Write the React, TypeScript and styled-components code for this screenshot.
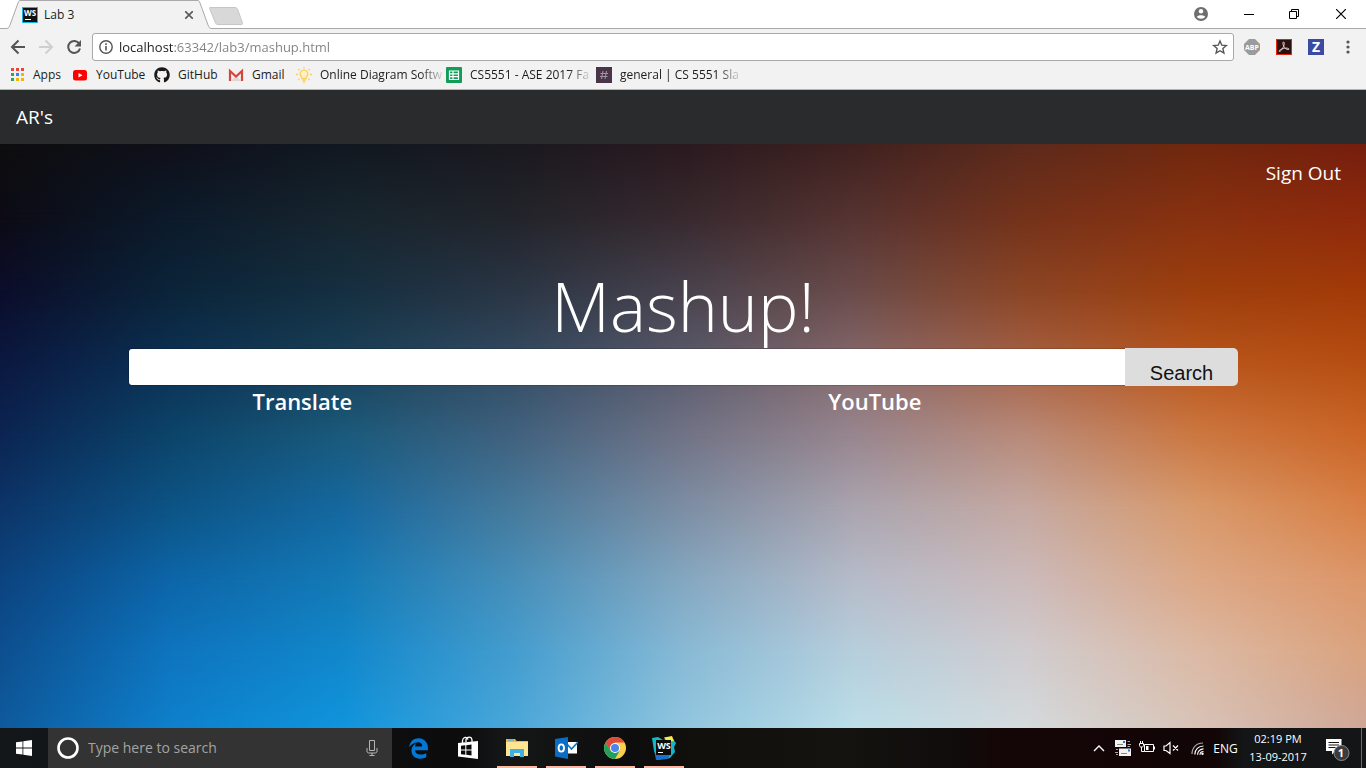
import React from "react";
import styled, { createGlobalStyle } from "styled-components";
import { FaEdgeLegacy, FaGithub } from "react-icons/fa";

const UI_FONT = '"Open Sans", "Noto Sans", sans-serif';

const GlobalStyle = createGlobalStyle`
  *, *::before, *::after { box-sizing: border-box; }
  body { margin: 0; font-family: ${UI_FONT}; font-size: 12px; color: #1c1c1c; }
  button { font: inherit; color: inherit; background: none; border: 0; padding: 0; margin: 0; cursor: pointer; }
  a { color: inherit; text-decoration: none; }
  h1, h2 { margin: 0; }
  svg { display: block; flex: none; }
`;

const Screen = styled.div`
  display: flex;
  flex-direction: column;
  min-height: 100vh;
`;

/* ---------- Browser window ---------- */

const Browser = styled.header`
  display: flex;
  flex-direction: column;
  background: #f2f2f2;
  border-bottom: 1px solid #b4b4b4;
`;

const TabStrip = styled.div`
  display: flex;
  align-items: flex-start;
  height: 29px;
  padding-left: 6px;
  background: #ffffff;
  border-bottom: 1px solid #a9a9a9;
`;

const Tab = styled.div`
  display: flex;
  height: 29px;
`;

const TabBody = styled.div`
  display: flex;
  align-items: center;
  gap: 6px;
  width: 178px;
  padding: 0 1px 0 2px;
  background: #f2f2f2;
  border-top: 1px solid #a9a9a9;
`;

const TabTitle = styled.span`
  flex: 1;
  line-height: 16px;
`;

const NewTab = styled.button`
  margin: 7px 0 0 -3px;
`;

const WindowButtons = styled.div`
  display: flex;
  align-items: center;
  height: 27px;
  margin-left: auto;
`;

const WindowButton = styled.button<{ $width: number }>`
  display: flex;
  align-items: center;
  justify-content: center;
  width: ${(p) => p.$width}px;
  height: 27px;
`;

const Toolbar = styled.div`
  display: flex;
  align-items: center;
  gap: 10px;
  height: 36px;
  padding: 0 10px;
`;

const HistoryButtons = styled.div`
  display: flex;
  gap: 12px;
`;

const ToolButton = styled.button`
  display: flex;
  align-items: center;
  justify-content: center;
  width: 16px;
  height: 16px;
`;

const AddressBar = styled.div`
  display: flex;
  flex: 1;
  align-items: center;
  gap: 5px;
  height: 28px;
  padding: 0 5px;
  background: #ffffff;
  border: 1px solid #a9a9a9;
  border-radius: 3px;
`;

const AddressInput = styled.input`
  flex: 1;
  min-width: 0;
  height: 20px;
  padding: 0;
  border: 0;
  outline: 0;
  font: 13px/20px ${UI_FONT};
  background: linear-gradient(90deg, #1c1c1c 55px, #808080 55px);
  background-clip: text;
  -webkit-text-fill-color: transparent;
`;

const Extensions = styled.div`
  display: flex;
  align-items: center;
  gap: 16px;
`;

const Bookmarks = styled.nav`
  display: flex;
  align-items: center;
  height: 24px;
  padding: 0 0 4px 9px;
`;

const BookmarkLink = styled.a<{ $width: number }>`
  display: flex;
  align-items: center;
  gap: 8px;
  width: ${(p) => p.$width}px;
`;

const BookmarkLabel = styled.span<{ $fade?: boolean }>`
  line-height: 18px;
  white-space: nowrap;
  mask-image: ${(p) => (p.$fade ? "linear-gradient(90deg, #000 82%, rgba(0, 0, 0, 0.15) 100%)" : "none")};
`;

/* ---------- Web page ---------- */

const Page = styled.main`
  display: flex;
  flex: 1;
  flex-direction: column;
  color: #ffffff;
`;

const NavBar = styled.nav`
  display: flex;
  align-items: center;
  height: 54px;
  padding: 0 16px;
  background: #292b2c;
  font-size: 19px;
`;

const Stage = styled.div`
  display: grid;
  flex: 1;
  grid-template: minmax(0, 1fr) / minmax(0, 1fr);
  background: #24171a;
`;

const Wash = styled.div<{ $stops: string; $from: number; $to: number }>`
  grid-area: 1 / 1;
  background: linear-gradient(90deg, ${(p) => p.$stops});
  mask-image: ${(p) =>
    p.$to === 0 ? "none" : `linear-gradient(180deg, transparent ${p.$from}%, #000 ${p.$to}%)`};
`;

const Content = styled.div`
  z-index: 1;
  display: flex;
  flex-direction: column;
  grid-area: 1 / 1;
`;

const SignOut = styled.a`
  align-self: flex-end;
  margin: 14px 25px 0 0;
  font-size: 19px;
  line-height: 30px;
`;

const Title = styled.h1`
  margin-top: 75px;
  font-size: 68px;
  font-weight: 300;
  line-height: 85px;
  text-align: center;
`;

const SearchForm = styled.form`
  display: flex;
  height: 38px;
  margin: 0 128px;
`;

const SearchInput = styled.input`
  flex: 1;
  min-width: 0;
  padding: 0 12px;
  border: 1px solid rgba(0, 0, 0, 0.15);
  border-right: 0;
  border-radius: 4px 0 0 4px;
  background: #ffffff;
  background-clip: padding-box;
  outline: 0;
  font-size: 16px;
`;

const SearchButton = styled.button`
  width: 113px;
  padding-top: 12px;
  border-radius: 0 5px 5px 0;
  background: #dddddd;
  color: #111111;
  font: 20px/24px "Liberation Sans", Arial, sans-serif;
`;

const Results = styled.div`
  display: flex;
  padding: 0 15% 0 16px;
`;

const ResultTitle = styled.h2`
  flex: 1;
  font-size: 22px;
  font-weight: 600;
  line-height: 30px;
  text-align: center;
`;

/* ---------- Taskbar ---------- */

const Taskbar = styled.footer`
  display: flex;
  height: 40px;
  background: linear-gradient(90deg, #14171a 0%, #0c0c0d 34%, #151717 37%, #0d0d0d 46%, #12100c 52%, #14130f 62%, #100c0c 70%, #150606 73%, #120506 89%, #131516 91%, #131516 100%);
  color: #ffffff;
`;

const StartButton = styled.button`
  display: flex;
  align-items: center;
  justify-content: center;
  width: 48px;
`;

const TaskSearch = styled.label`
  display: flex;
  align-items: center;
  gap: 8px;
  width: 344px;
  padding: 0 14px 0 8px;
  background: #333333;
`;

const TaskSearchInput = styled.input`
  flex: 1;
  min-width: 0;
  padding: 0;
  border: 0;
  outline: 0;
  background: none;
  font: 14px/20px ${UI_FONT};
  color: #ffffff;
  &::placeholder { color: #a3a3a3; opacity: 1; }
`;

const TaskApps = styled.div`
  display: flex;
  padding-left: 2px;
`;

const TaskApp = styled.button<{ $open?: boolean }>`
  display: flex;
  align-items: center;
  justify-content: center;
  width: 49px;
  background: ${(p) =>
    p.$open ? "linear-gradient(#fbb9a5, #fbb9a5) center bottom / 40px 2px no-repeat" : "none"};
`;

const Tray = styled.div`
  display: flex;
  align-items: center;
  margin-left: auto;
  border-right: 1px solid #6a6a6a;
  margin-right: 4px;
`;

const TrayButton = styled.button<{ $width: number }>`
  display: flex;
  align-items: center;
  justify-content: center;
  width: ${(p) => p.$width}px;
  height: 40px;
`;

const Clock = styled.button`
  width: 76px;
  font-size: 11px;
  line-height: 18px;
  white-space: nowrap;
`;

/* ---------- Drawings ---------- */

const Lettering = styled.text<{ $size: number }>`
  fill: #ffffff;
  font-family: "Open Sans", sans-serif;
  font-size: ${(p) => p.$size}px;
  font-weight: 700;
  text-anchor: middle;
`;

const WebStormBadge = () => (
  <svg width="16" height="16" viewBox="0 0 16 16" aria-hidden="true">
    <rect width="16" height="16" fill="#16b8dc" />
    <rect x="1" y="1" width="14" height="14" fill="#111" />
    <Lettering $size={8} x="8" y="9">WS</Lettering>
    <rect x="3" y="12" width="6" height="1" fill="#fff" />
  </svg>
);

const arrow = (color: string, back: boolean) => (
  <svg width="16" height="16" viewBox="0 0 16 16" fill="none" stroke={color} strokeWidth="2" aria-hidden="true">
    <path d={back ? "M15 8H2.500M8.500 1.500L2 8l6.500 6.500" : "M1 8h12.500M7.500 1.500L14 8l-6.500 6.500"} />
  </svg>
);

const AppsIcon = () => {
  const colors = ["#e8453c", "#e8453c", "#e8453c", "#2da94f", "#3b82f0", "#f5b400", "#2da94f", "#f5b400", "#f5b400"];
  return (
    <svg width="16" height="16" viewBox="0 0 16 16" aria-hidden="true">
      {colors.map((c, i) => (
        <rect key={i} x={2 + (i % 3) * 5} y={1 + Math.floor(i / 3) * 5} width="3" height="3" fill={c} />
      ))}
    </svg>
  );
};

const YouTubeIcon = () => (
  <svg width="16" height="16" viewBox="0 0 16 16" aria-hidden="true">
    <rect x="1" y="3" width="14" height="10.500" rx="2.500" fill="#f00" />
    <path d="M6.500 6v4.600l4-2.300z" fill="#fff" />
  </svg>
);

const GmailIcon = () => (
  <svg width="16" height="16" viewBox="0 0 16 16" aria-hidden="true">
    <rect x="1" y="3" width="14" height="11" fill="#f3efee" />
    <path d="M3 14l5-5 5 5z" fill="#ddd8d6" />
    <path d="M2 14V4l6 5.500L14 4v10" fill="none" stroke="#d6453b" strokeWidth="2.200" />
  </svg>
);

const BulbIcon = () => (
  <svg width="16" height="16" viewBox="0 0 16 16" fill="none" stroke="#fbcf5b" strokeWidth="1.300" aria-hidden="true">
    <path d="M6 11.500c0-2-1.800-2.500-1.800-4.500a3.800 3.800 0 0 1 7.600 0c0 2-1.800 2.500-1.800 4.500z" fill="#fff3c4" />
    <path d="M6 13h4M7 15h2M0 7.500h2M14 7.500h2M2.300 2l1.300 1.300M13.700 2l-1.300 1.300M8 0v1.500M2.300 13l1.300-1.300M13.700 13l-1.300-1.300" />
  </svg>
);

const SheetIcon = () => (
  <svg width="16" height="16" viewBox="0 0 16 16" aria-hidden="true">
    <rect width="16" height="16" rx="1" fill="#0f9d58" />
    <path d="M3.500 4h9v8.500h-9zM3.500 6.800h9M3.500 9.600h9M7 4v8.500" fill="none" stroke="#fff" strokeWidth="1.200" />
  </svg>
);

const SlackIcon = () => (
  <svg width="16" height="16" viewBox="0 0 16 16" aria-hidden="true">
    <rect width="16" height="16" fill="#4a3449" />
    <path d="M7 4L5.500 12M10.500 4L9 12M4.500 6.500h7.500M4 9.500h7.500" fill="none" stroke="#a394a2" />
  </svg>
);

const AbpIcon = () => (
  <svg width="16" height="16" viewBox="0 0 16 16" aria-hidden="true">
    <path d="M5 0h6l5 5v6l-5 5H5l-5-5V5z" fill="#9b9b9b" />
    <Lettering $size={7} x="8" y="11">ABP</Lettering>
  </svg>
);

const AcrobatIcon = () => (
  <svg width="16" height="16" viewBox="0 0 16 16" aria-hidden="true">
    <rect x=".5" y=".5" width="15" height="15" fill="#2b1010" stroke="#e1250c" />
    <path d="M7.500 3c1.400 0 .8 3-.3 5.200C6 10.700 4 13 3.200 12.400c-.8-.9 2-2.700 4.900-3.100 2.400-.4 5-.2 4.900.8-.2 1.200-3 .2-4.600-1.700C7 6.700 6.300 3 7.500 3z" fill="none" stroke="#e8dcdc" strokeWidth=".9" />
  </svg>
);

const ZIcon = () => (
  <svg width="16" height="16" viewBox="0 0 16 16" aria-hidden="true">
    <rect width="16" height="16" fill="#3b4ba3" />
    <Lettering $size={14} x="8" y="13">Z</Lettering>
  </svg>
);

const StoreIcon = () => (
  <svg width="22" height="24" viewBox="0 0 22 24" aria-hidden="true">
    <path d="M5.500 7V4.500C6 1 10 0 11 3.500M9 6V3.500C10 .5 14.500 0 15 4v2" fill="none" stroke="#fff" strokeWidth="1.300" />
    <path d="M1 7l20-2v18L1 20.500z" fill="#fff" />
    <path d="M4 9.800l4.300-.5v4.200H4zM9.300 9.200l5.200-.6v4.900H9.300zM4 14.500h4.300v4.200L4 18.200zM9.300 14.500h5.200v5l-5.200-.7z" fill="#0c0c0d" />
  </svg>
);

const FolderIcon = () => (
  <svg width="22" height="20" viewBox="0 0 22 20" aria-hidden="true">
    <path d="M0 1h9l1.500 2H22v15H0z" fill="#f0b93c" />
    <path d="M0 4h22v14H0z" fill="#ffe491" />
    <rect x="2" y="1.500" width="6" height="1.200" fill="#4fb3e8" />
    <path d="M4 11h14v8h-4v-4H8v4H4z" fill="#3fb0e6" />
  </svg>
);

const OutlookIcon = () => (
  <svg width="24" height="24" viewBox="0 0 24 24" aria-hidden="true">
    <rect x="12" y="6" width="11" height="11.500" fill="#fff" />
    <path d="M13 8l4.500 5L24 6" fill="none" stroke="#0f72c8" strokeWidth="1.600" />
    <path d="M1 3l13-2v22L1 20.500z" fill="#0a6cc2" />
    <ellipse cx="7.300" cy="12" rx="2.700" ry="3.600" fill="none" stroke="#fff" strokeWidth="1.900" />
  </svg>
);

const ChromeIcon = () => (
  <svg width="22" height="22" viewBox="0 0 22 22" aria-hidden="true">
    <circle cx="11" cy="11" r="11" fill="#fbd04b" />
    <path d="M1.500 5.500A11 11 0 0 1 20.500 5.500H11v5.500L6.200 13.700z" fill="#dd4b3e" />
    <path d="M1.500 5.500A11 11 0 0 0 11 22l4.700-8.300H6.300z" fill="#1fa05f" />
    <circle cx="11" cy="11" r="5" fill="#fff" />
    <circle cx="11" cy="11" r="4" fill="#4a86ee" />
  </svg>
);

const WebStormIcon = () => (
  <svg width="24" height="24" viewBox="0 0 24 24" aria-hidden="true">
    <path d="M0 2l6-1 5 3 9-2 4 5-2 4 1 5-5 6-13 2L2 15z" fill="#12b7c9" />
    <path d="M12 1.500L20 0l2 5-7 1z" fill="#f2ee50" />
    <path d="M3 18h15l-2 5-12 1z" fill="#1870d0" />
    <rect x="4" y="4" width="15" height="15" fill="#0c0c0c" />
    <Lettering $size={9} x="12" y="13">WS</Lettering>
    <rect x="6" y="16" width="5" height="1" fill="#fff" />
  </svg>
);

/* ---------- Data ---------- */

const bookmarks = [
  { label: "Apps", width: 63, icon: <AppsIcon /> },
  { label: "YouTube", width: 82, icon: <YouTubeIcon /> },
  { label: "GitHub", width: 74, icon: <FaGithub size={16} color="#1b1817" /> },
  { label: "Gmail", width: 68, icon: <GmailIcon /> },
  { label: "Online Diagram Softw", width: 150, icon: <BulbIcon />, fade: true },
  { label: "CS5551 - ASE 2017 Fa", width: 150, icon: <SheetIcon />, fade: true },
  { label: "general | CS 5551 Sla", width: 150, icon: <SlackIcon />, fade: true },
];

const apps = [
  { name: "Microsoft Edge", icon: <FaEdgeLegacy size={21} color="#0078d7" /> },
  { name: "Store", icon: <StoreIcon /> },
  { name: "File Explorer", icon: <FolderIcon />, open: true },
  { name: "Outlook", icon: <OutlookIcon />, open: true },
  { name: "Google Chrome", icon: <ChromeIcon />, open: true },
  { name: "WebStorm", icon: <WebStormIcon />, open: true },
];

/* Horizontal colour runs of the backdrop, top to bottom; each fades in over the one before. */
const washes = [
  "#0e0e0f, #0f101a, #111821, #1a191f, #2a1a1f, #3f211f, #5d2a1c, #70280e, #761e0e",
  "#0c0b15, #0c1a2a, #17252e, #22242b, #37292e, #553331, #74321a, #883110, #8f290c",
  "#0b0d2a, #0b2439, #152f40, #2a3544, #48424d, #6a4b4a, #8b4525, #9d3e0d, #a23a08",
  "#0b1840, #0c3154, #194058, #334b62, #595a6b, #86696c, #a66145, #b8561c, #b64e12",
  "#0b2552, #0c446a, #1a5a7c, #40627f, #717386, #98868f, #b98b7a, #cc7842, #cb6526",
  "#0c3569, #0c5486, #1568a0, #467a9c, #7c8ea4, #aaa5b0, #c5a9a2, #d89a6c, #d88046",
  "#0c4480, #0d66a9, #147ab6, #468fba, #84a8c1, #b6bcca, #ccbbbc, #dca988, #dc976a",
  "#0d5090, #0e75bf, #1188cc, #449dcf, #88bad6, #b6cfdd, #d0cdd0, #dcbaa6, #daa37f",
  "#0e5a9c, #0e80cc, #1094dc, #4aa7d9, #90c5de, #bcdee8, #d4dadd, #d8c3b7, #cfa797",
];
const washStep = 100 / (washes.length - 1);

export default function App() {
  return (
    <Screen>
      <GlobalStyle />
      <Browser>
        <TabStrip>
          <Tab>
            <svg width="14" height="29" viewBox="0 0 14 29" aria-hidden="true">
              <path d="M0 29L0 28.500C3 28.500 3 27 4 25L12 3C13 1 13 .5 14 .5V29z" fill="#f2f2f2" />
              <path d="M0 28.500C3 28.500 3 27 4 25L12 3C13 1 13 .5 14 .5" fill="none" stroke="#a9a9a9" />
            </svg>
            <TabBody>
              <WebStormBadge />
              <TabTitle>Lab 3</TabTitle>
              <ToolButton aria-label="Close tab">
                <svg width="8" height="8" viewBox="0 0 8 8" stroke="#5a5a5a" strokeWidth="1.600" aria-hidden="true">
                  <path d="M0 0l8 8M8 0L0 8" />
                </svg>
              </ToolButton>
            </TabBody>
            <svg width="14" height="29" viewBox="0 0 14 29" aria-hidden="true">
              <path d="M14 29V28.500C11 28.500 11 27 10 25L2 3C1 1 1 .5 0 .5V29z" fill="#f2f2f2" />
              <path d="M14 28.500C11 28.500 11 27 10 25L2 3C1 1 1 .5 0 .5" fill="none" stroke="#a9a9a9" />
            </svg>
          </Tab>
          <NewTab aria-label="New tab">
            <svg width="34" height="18" viewBox="0 0 34 18" aria-hidden="true">
              <path d="M1 .5h25c1 0 2 .5 2.500 1.500L33.500 16c.3 1-.2 1.500-1 1.500H9c-1 0-2-.5-2.500-1.500L.8 2C.5 1 .5.500 1 .500z" fill="#d8d8d8" stroke="#c6c6c6" />
            </svg>
          </NewTab>
          <WindowButtons>
            <WindowButton $width={51} aria-label="Profile">
              <svg width="14" height="14" viewBox="0 0 14 14" aria-hidden="true">
                <circle cx="7" cy="7" r="7" fill="#6e6e6e" />
                <circle cx="7" cy="4.300" r="2.200" fill="#fff" />
                <path d="M2.800 9.800C4 7.600 10 7.600 11.200 9.800 10 12.400 4 12.400 2.800 9.800z" fill="#fff" />
              </svg>
            </WindowButton>
            <WindowButton $width={46} aria-label="Minimize">
              <svg width="10" height="10" viewBox="0 0 10 10" stroke="#000" aria-hidden="true">
                <path d="M0 5.500h10" />
              </svg>
            </WindowButton>
            <WindowButton $width={44} aria-label="Restore">
              <svg width="10" height="10" viewBox="0 0 10 10" fill="none" stroke="#000" aria-hidden="true">
                <path d="M.5 2.500h7v7h-7zM2.500 2.500v-2h7v7h-2" />
              </svg>
            </WindowButton>
            <WindowButton $width={50} aria-label="Close">
              <svg width="10" height="10" viewBox="0 0 10 10" stroke="#000" strokeWidth="1.200" aria-hidden="true">
                <path d="M0 0l10 10M10 0L0 10" />
              </svg>
            </WindowButton>
          </WindowButtons>
        </TabStrip>

        <Toolbar>
          <HistoryButtons>
            <ToolButton aria-label="Back">{arrow("#555555", true)}</ToolButton>
            <ToolButton aria-label="Forward">{arrow("#cfcfcf", false)}</ToolButton>
            <ToolButton aria-label="Reload">
              <svg width="16" height="16" viewBox="0 0 16 16" aria-hidden="true">
                <path d="M13.300 4.700A6 6 0 1 0 14 9.500" fill="none" stroke="#555" strokeWidth="2" />
                <path d="M15 1v6.500H8.500z" fill="#555" />
              </svg>
            </ToolButton>
          </HistoryButtons>
          <AddressBar>
            <ToolButton aria-label="Site information">
              <svg width="14" height="14" viewBox="0 0 14 14" fill="none" stroke="#555" aria-hidden="true">
                <circle cx="7" cy="7" r="6.200" strokeWidth="1.400" />
                <path d="M7 6v4.500M7 3.300v1.600" strokeWidth="1.600" />
              </svg>
            </ToolButton>
            <AddressInput aria-label="Address" defaultValue="localhost:63342/lab3/mashup.html" />
            <ToolButton aria-label="Bookmark this page">
              <svg width="16" height="16" viewBox="0 0 16 16" fill="none" stroke="#555" strokeWidth="1.400" aria-hidden="true">
                <path d="M8 2l1.800 4.200 4.500.4-3.400 3 1 4.400L8 11.700 4.100 14l1-4.400-3.400-3 4.500-.4z" />
              </svg>
            </ToolButton>
          </AddressBar>
          <Extensions>
            <ToolButton aria-label="Adblock Plus"><AbpIcon /></ToolButton>
            <ToolButton aria-label="Adobe Acrobat"><AcrobatIcon /></ToolButton>
            <ToolButton aria-label="Zotero"><ZIcon /></ToolButton>
            <ToolButton aria-label="Menu">
              <svg width="4" height="14" viewBox="0 0 4 14" fill="#555" aria-hidden="true">
                <circle cx="2" cy="2" r="1.600" />
                <circle cx="2" cy="7" r="1.600" />
                <circle cx="2" cy="12" r="1.600" />
              </svg>
            </ToolButton>
          </Extensions>
        </Toolbar>

        <Bookmarks aria-label="Bookmarks">
          {bookmarks.map((b) => (
            <BookmarkLink key={b.label} href="#" $width={b.width}>
              {b.icon}
              <BookmarkLabel $fade={b.fade}>{b.label}</BookmarkLabel>
            </BookmarkLink>
          ))}
        </Bookmarks>
      </Browser>

      <Page>
        <NavBar>
          <a href="#">AR's</a>
        </NavBar>
        <Stage>
          {washes.map((stops, i) => (
            <Wash key={i} $stops={stops} $from={(i - 1) * washStep} $to={i * washStep} />
          ))}
          <Content>
            <SignOut href="#">Sign Out</SignOut>
            <Title>Mashup!</Title>
            <SearchForm onSubmit={(e) => e.preventDefault()}>
              <SearchInput type="text" aria-label="Search text" />
              <SearchButton type="submit">Search</SearchButton>
            </SearchForm>
            <Results>
              <ResultTitle>Translate</ResultTitle>
              <ResultTitle>YouTube</ResultTitle>
            </Results>
          </Content>
        </Stage>
      </Page>

      <Taskbar>
        <StartButton aria-label="Start">
          <svg width="16" height="16" viewBox="0 0 16 16" fill="#fff" aria-hidden="true">
            <path d="M0 2.300L6.500 1.400V7.500H0zM7.300 1.300L16 0v7.500H7.300zM0 8.400h6.500v6.200L0 13.700zM7.300 8.400H16V16l-8.700-1.300z" />
          </svg>
        </StartButton>
        <TaskSearch>
          <svg width="24" height="24" viewBox="0 0 24 24" fill="none" stroke="#fff" aria-hidden="true">
            <circle cx="12" cy="12" r="9.500" strokeWidth="2.600" />
          </svg>
          <TaskSearchInput type="text" placeholder="Type here to search" aria-label="Type here to search" />
          <svg width="12" height="18" viewBox="0 0 12 18" fill="none" stroke="#b5b5b5" aria-hidden="true">
            <path d="M3.500 1.500h5v10h-5zM1 9v3c0 1.500.8 2 2 2h6c1.200 0 2-.5 2-2V9M6 14v2.500M3.500 16.500h5" />
          </svg>
        </TaskSearch>
        <TaskApps>
          {apps.map((a) => (
            <TaskApp key={a.name} aria-label={a.name} $open={a.open}>
              {a.icon}
            </TaskApp>
          ))}
        </TaskApps>
        <Tray>
          <TrayButton $width={24} aria-label="Show hidden icons">
            <svg width="12" height="8" viewBox="0 0 12 8" fill="none" stroke="#fff" strokeWidth="1.400" aria-hidden="true">
              <path d="M1 7l5-5 5 5" />
            </svg>
          </TrayButton>
          <TrayButton $width={24} aria-label="Messages">
            <svg width="16" height="16" viewBox="0 0 16 16" aria-hidden="true">
              <path d="M0 0h11v7H0zM4 8.500h12V16H4z" fill="#f2f2f2" />
              <path d="M2 4.500h6M6 13.500h6" stroke="#888" />
              <path d="M8 1h2v2H8zM13 9.500h2v2h-2z" fill="#2a74c9" />
              <path d="M12.500 1.500H15M12.500 4.500H16M12.500 6.500H15M1 9.500h2M0 12.500h3M1 14.500h2" stroke="#aaa" />
            </svg>
          </TrayButton>
          <TrayButton $width={24} aria-label="Battery">
            <svg width="16" height="14" viewBox="0 0 16 14" fill="none" stroke="#fff" aria-hidden="true">
              <path d="M5.500 3.500h9v7h-9zM15.500 5.500v3M1.500 0v2M3.500 0v2M.5 2.500h4v2c0 1-.5 1.500-2 1.500s-2-.5-2-1.500zM2.500 6v4.500h3" />
              <path d="M7 5h2.500v4H7z" fill="#fff" stroke="none" />
            </svg>
          </TrayButton>
          <TrayButton $width={24} aria-label="Volume muted">
            <svg width="16" height="14" viewBox="0 0 16 14" fill="none" stroke="#fff" strokeWidth="1.200" aria-hidden="true">
              <path d="M1 5h2l4-3.500v11L3 9.500H1zM10 4.500l5 5M15 4.500l-5 5" />
            </svg>
          </TrayButton>
          <TrayButton $width={28} aria-label="Wi-Fi">
            <svg width="13" height="13" viewBox="0 0 13 13" fill="none" stroke="#fff" strokeWidth="1.200" aria-hidden="true">
              <path d="M1 12C1 5.500 5.500 1 12 1" stroke="#aaa" />
              <path d="M3.800 12.500C3.800 7.500 7.500 4 12.500 4M6.500 12.800c0-3.200 2.600-6 6-6M9 12.800c0-1.800 1.500-3.300 3.500-3.300" />
              <circle cx="11.500" cy="11.700" r="1.200" fill="#fff" stroke="none" />
            </svg>
          </TrayButton>
          <TrayButton $width={29} aria-label="Input language">ENG</TrayButton>
          <Clock>
            02:19 PM
            <br />
            13-09-2017
          </Clock>
          <TrayButton $width={45} aria-label="Notifications, 1 new">
            <svg width="30" height="26" viewBox="0 0 30 26" aria-hidden="true">
              <path d="M2 4h15.500v12H11.500L8 19.500V16H2z" fill="#fff" />
              <path d="M4.500 7.500h10.500M4.500 10h10.500M4.500 12.500h7" stroke="#151515" />
              <circle cx="17.500" cy="18" r="7.500" fill="#3a3c3d" stroke="#8a8a8a" />
              <Lettering $size={11} x="17" y="22">1</Lettering>
            </svg>
          </TrayButton>
        </Tray>
      </Taskbar>
    </Screen>
  );
}
